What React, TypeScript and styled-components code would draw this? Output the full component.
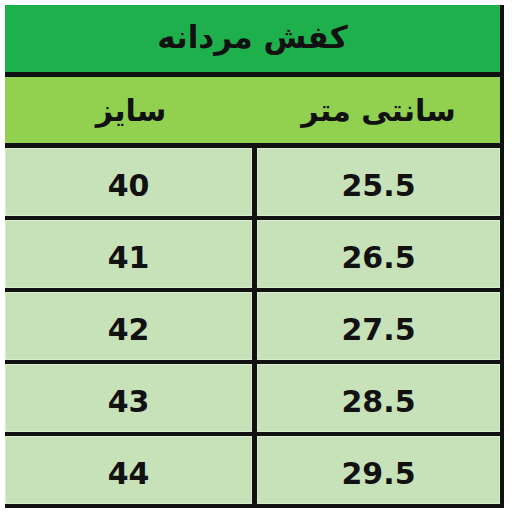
import styled, { createGlobalStyle } from 'styled-components';

const rows = [
  { size: '40', cm: '25.5' },
  { size: '41', cm: '26.5' },
  { size: '42', cm: '27.5' },
  { size: '43', cm: '28.5' },
  { size: '44', cm: '29.5' },
];

const GlobalStyle = createGlobalStyle`
  html, body {
    margin: 0;
    padding: 0;
    background: #ffffff;
  }
  body {
    font-family: "DejaVu Sans", "Noto Sans", sans-serif;
  }
`;

const Page = styled.div`
  width: 512px;
  height: 512px;
  padding: 5px 0 0 5px;
  box-sizing: border-box;
`;

const Table = styled.div`
  width: 499px;
  border-right: 4px solid #111;
  box-sizing: border-box;
  display: flex;
  flex-direction: column;
`;

const TitleRow = styled.div`
  height: 72px;
  box-sizing: border-box;
  background: #1fb04e;
  border-bottom: 5px solid #111;
  display: flex;
  align-items: center;
  justify-content: center;
  font-size: 31px;
  font-weight: bold;
  color: #111;
  direction: rtl;
  padding-bottom: 4px;
`;

const Row = styled.div<{ $head?: boolean }>`
  height: ${(p) => (p.$head ? 71 : 72)}px;
  box-sizing: border-box;
  display: grid;
  grid-template-columns: 252px 1fr;
  border-bottom: ${(p) => (p.$head ? 5 : 4)}px solid #111;
  background: ${(p) => (p.$head ? '#92d050' : '#c7e2b9')};
`;

const Cell = styled.div<{ $divider?: boolean; $head?: boolean }>`
  box-sizing: border-box;
  display: flex;
  align-items: center;
  justify-content: center;
  border-right: ${(p) => (p.$divider ? '5px solid #111' : 'none')};
  box-shadow: ${(p) => (p.$head ? 'none' : 'inset 0 0 0 1px rgba(255, 255, 255, 0.3)')};
  font-size: 30px;
  font-weight: bold;
  color: #111;
  direction: rtl;
  padding-top: ${(p) => (p.$head ? 0 : 6)}px;
`;

export default function App() {
  return (
    <>
      <GlobalStyle />
      <Page>
        <Table>
          <TitleRow>کفش مردانه</TitleRow>
          <Row $head>
            <Cell $head>سایز</Cell>
            <Cell $head>سانتی متر</Cell>
          </Row>
          {rows.map((r) => (
            <Row key={r.size}>
              <Cell $divider>{r.size}</Cell>
              <Cell>{r.cm}</Cell>
            </Row>
          ))}
        </Table>
      </Page>
    </>
  );
}
